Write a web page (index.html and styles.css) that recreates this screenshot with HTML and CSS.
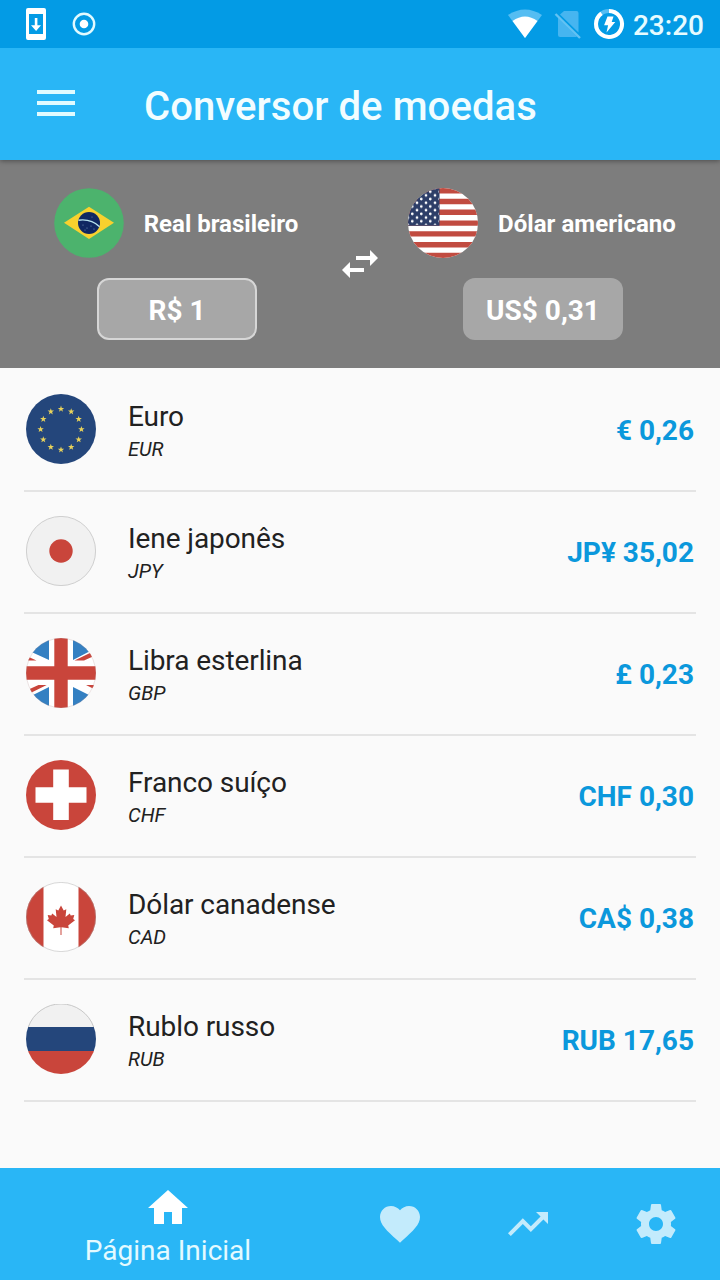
FILE: index.html
```html
<!DOCTYPE html>
<html lang="pt-BR">
<head>
<meta charset="utf-8">
<title>Conversor de moedas</title>
<link rel="stylesheet" href="styles.css">
</head>
<body>
<svg class="defs" width="0" height="0">
  <defs>
    <clipPath id="disc"><circle cx="35" cy="35" r="35"/></clipPath>
    <path id="star" d="M0-3.4 .8-1.1H3.2L1.3.4 2 2.7 0 1.3-2 2.7-1.3.4-3.2-1.1H-.8z"/>
    <pattern id="stars" width="9" height="7.4" patternUnits="userSpaceOnUse">
      <circle cx="4.3" cy="3.7" r="1.35" fill="#fff"/>
      <circle cx="0" cy="0" r="1.35" fill="#fff"/><circle cx="9" cy="0" r="1.35" fill="#fff"/>
      <circle cx="0" cy="7.4" r="1.35" fill="#fff"/><circle cx="9" cy="7.4" r="1.35" fill="#fff"/>
    </pattern>
  </defs>
</svg>
<div class="app">
  <header class="status">
    <svg width="20" height="32" viewBox="0 0 20 32"><path fill="#fff" fill-rule="evenodd" d="M2 0H18a2 2 0 0 1 2 2V30a2 2 0 0 1-2 2H2a2 2 0 0 1-2-2V2A2 2 0 0 1 2 0zM3 6V26H17V6zM8.800 10h2.600v7.200H15L10.100 23 5 17.200H8.800z"/></svg>
    <svg class="status-record" width="24" height="24" viewBox="0 0 24 24"><circle cx="12" cy="12" r="10.200" fill="none" stroke="#e1faff" stroke-width="2.400"/><circle cx="12" cy="12" r="4.300" fill="#fff"/></svg>
    <div class="status-right">
      <svg width="36" height="30" viewBox="0 0 36 30"><path fill="#55bdf2" d="M18 29 1 6Q18-5 35 6z"/><path fill="#fff" d="M18 29 5.500 12Q18 3 30.500 12z"/></svg>
      <svg class="status-sim" width="28" height="30" viewBox="0 0 28 30"><path fill="#46b5f0" d="M10 2H22.500a2 2 0 0 1 2 2V23.500L6 5.500zM4 8.500 23 27.500a2 2 0 0 1-1 .5H6a2 2 0 0 1-2-2z"/><path d="M1.500 5 26 29" stroke="#62c2f3" stroke-width="2.400"/></svg>
      <svg class="status-battery" width="32" height="32" viewBox="0 0 32 32"><circle cx="16" cy="16" r="13" fill="none" stroke="#55bdf2" stroke-width="4"/><path d="M16 3A13 13 0 1 1 8.500 5.400" fill="none" stroke="#fff" stroke-width="4"/><path fill="#fff" d="M14.500 8.500h6L18.700 14h3.600L13.500 24.500l1.600-7.300h-4z"/></svg>
      <span class="clock">23:20</span>
    </div>
  </header>
  <div class="bar">
    <span class="menu"><i></i><i></i><i></i></span>
    <h1 class="bar-title">Conversor de moedas</h1>
  </div>
  <section class="converter">
    <div class="side side-from">
      <div class="side-name">
        <svg class="flag" viewBox="0 0 70 70"><circle cx="35" cy="35" r="34.800" fill="#4cb36d"/><path fill="#f8d12e" d="M10 34.800 35 18.700 60 34.800 35 51z"/><circle cx="35" cy="35" r="11" fill="#102762"/><path d="M24.500 32.200Q37 30.500 45.600 38.700" fill="none" stroke="#b9e3ef" stroke-width="1.400"/><g fill="#7896ba"><circle cx="29" cy="37" r=".6"/><circle cx="33" cy="40" r=".6"/><circle cx="37" cy="38" r=".6"/><circle cx="31" cy="42" r=".5"/><circle cx="40" cy="41" r=".6"/><circle cx="38" cy="29" r=".5"/></g></svg>
        <span>Real brasileiro</span>
      </div>
      <div class="amount amount-active">R$ 1</div>
    </div>
    <svg class="icon" viewBox="0 0 24 24"><path d="M6.990 11 3 15l3.990 4v-3H14v-2H6.990zM21 9l-3.990-4v3H10v2h7.010v3z"/></svg>
    <div class="side side-to">
      <div class="side-name">
        <svg class="flag" viewBox="0 0 70 70"><g clip-path="url(#disc)"><path fill="#fff" d="M0 0H70V70H0z"/><path d="M0 2.700H70M0 13.500H70M0 24.300H70M0 35.100H70M0 45.900H70M0 56.700H70M0 67.500H70" stroke="#c14b40" stroke-width="5.400"/><path fill="#2d3e68" d="M0 0H31.500V37.800H0z"/><path fill="url(#stars)" d="M0 0H30.500V36.800H0z"/></g></svg>
        <span>Dólar americano</span>
      </div>
      <div class="amount">US$ 0,31</div>
    </div>
  </section>
  <main class="list">
    <div class="row">
      <svg class="flag" viewBox="0 0 70 70"><circle cx="35" cy="35" r="35" fill="#24467b"/><g fill="#e8d25b"><use href="#star" x="35" y="15"/><use href="#star" x="45.200" y="17.700"/><use href="#star" x="52.700" y="25.200"/><use href="#star" x="55.400" y="35.400"/><use href="#star" x="52.700" y="45.600"/><use href="#star" x="45.200" y="53.100"/><use href="#star" x="35" y="55.800"/><use href="#star" x="24.800" y="53.100"/><use href="#star" x="17.300" y="45.600"/><use href="#star" x="14.600" y="35.400"/><use href="#star" x="17.300" y="25.200"/><use href="#star" x="24.800" y="17.700"/></g></svg>
      <div class="names"><span class="name">Euro</span><span class="code">EUR</span></div>
      <span class="value">€ 0,26</span>
    </div>
    <div class="row">
      <svg class="flag" viewBox="0 0 70 70"><circle cx="35" cy="35" r="34.600" fill="#f1f1f1" stroke="#c4c4c4" stroke-width=".8"/><circle cx="35" cy="35" r="11.700" fill="#c9453b"/></svg>
      <div class="names"><span class="name">Iene japonês</span><span class="code">JPY</span></div>
      <span class="value">JP¥ 35,02</span>
    </div>
    <div class="row">
      <svg class="flag" viewBox="0 0 70 70"><g clip-path="url(#disc)"><path fill="#fff" d="M0 0H70V70H0z"/><path fill="#3480c2" d="M0 11.500V0H23V22zM47 0H70V10L47 22zM0 60.500 23 49V70H0zM47 49 70 60.500V70H47z"/><path fill="#c9453b" d="M0 17.800 10.500 22.600H0zM48.500 22.600 65 14.500 67.500 18.200 58 22.600zM20.700 47 4.500 55 2.500 51.500 12.500 47zM60 47H70V52z"/><path fill="#c9453b" d="M28.300 0H41.700V28.300H70V41.700H41.700V70H28.300V41.700H0V28.300H28.300z"/></g><circle cx="35" cy="35" r="34.700" fill="none" stroke="#ad8888" stroke-opacity=".4" stroke-width=".6"/></svg>
      <div class="names"><span class="name">Libra esterlina</span><span class="code">GBP</span></div>
      <span class="value">£ 0,23</span>
    </div>
    <div class="row">
      <svg class="flag" viewBox="0 0 70 70"><circle cx="35" cy="35" r="35" fill="#c9453b"/><path fill="#fff" d="M27.200 9.500H42.800V27.200H60.500V42.800H42.800V60H27.200V42.800H9.500V27.200H27.200z"/></svg>
      <div class="names"><span class="name">Franco suíço</span><span class="code">CHF</span></div>
      <span class="value">CHF 0,30</span>
    </div>
    <div class="row">
      <svg class="flag" viewBox="0 0 70 70"><g clip-path="url(#disc)"><path fill="#fff" d="M0 0H70V70H0z"/><path fill="#c9453b" d="M0 0H17.500V70H0zM52.500 0H70V70H52.500z"/><path fill="#c9453b" d="M35 23.500 37.700 28.500 40.300 27.200 39.500 35 43.800 31.500 44.700 33.600 48.300 33 47.200 37 49 38.200 42.200 43.600 42.800 46.300 35.500 45.200V53H34.500V45.200L27.200 46.300 27.800 43.600 21 38.200 22.800 37 21.700 33 25.300 33.600 26.200 31.500 30.500 35 29.700 27.200 32.300 28.500z"/></g><circle cx="35" cy="35" r="34.600" fill="none" stroke="#a0a0a0" stroke-opacity=".6" stroke-width=".7"/></svg>
      <div class="names"><span class="name">Dólar canadense</span><span class="code">CAD</span></div>
      <span class="value">CA$ 0,38</span>
    </div>
    <div class="row">
      <svg class="flag" viewBox="0 0 70 70"><g clip-path="url(#disc)"><path fill="#f1f1f1" d="M0 0H70V24H0z"/><path fill="#24467b" d="M0 23H70V47H0z"/><path fill="#c9453b" d="M0 47H70V70H0z"/></g><path d="M2.300 23A34.700 34.700 0 0 1 67.700 23" fill="none" stroke="#bbb" stroke-width=".8"/></svg>
      <div class="names"><span class="name">Rublo russo</span><span class="code">RUB</span></div>
      <span class="value">RUB 17,65</span>
    </div>
  </main>
  <nav class="tabs">
    <div class="tab tab-active">
      <svg class="icon" viewBox="0 0 24 24"><path d="M10 20v-6h4v6h5v-8h3L12 3 2 12h3v8z"/></svg>
      <span class="tab-label">Página Inicial</span>
    </div>
    <div class="tab"><svg class="icon" viewBox="0 0 24 24"><path d="M12 21.350l-1.450-1.320C5.400 15.360 2 12.280 2 8.500 2 5.420 4.420 3 7.500 3c1.740 0 3.410.81 4.500 2.090C13.090 3.810 14.760 3 16.500 3 19.580 3 22 5.420 22 8.500c0 3.780-3.400 6.860-8.550 11.540z"/></svg></div>
    <div class="tab"><svg class="icon" viewBox="0 0 24 24"><path d="M16 6l2.290 2.290-4.880 4.880-4-4L2 16.590 3.410 18l6-6 4 4 6.300-6.290L22 12V6z"/></svg></div>
    <div class="tab"><svg class="icon" viewBox="0 0 24 24"><path d="M19.430 12.980c.04-.32.07-.64.07-.98s-.03-.66-.07-.98l2.110-1.650c.19-.15.24-.42.12-.64l-2-3.460c-.12-.22-.39-.3-.61-.22l-2.490 1c-.52-.4-1.080-.73-1.690-.98l-.38-2.650C14.460 2.180 14.250 2 14 2h-4c-.25 0-.46.18-.49.42l-.38 2.650c-.61.25-1.170.59-1.690.98l-2.490-1c-.23-.09-.49 0-.61.22l-2 3.460c-.13.22-.07.49.12.64l2.110 1.650c-.04.32-.07.65-.07.98s.03.66.07.98l-2.110 1.650c-.19.15-.24.42-.12.64l2 3.460c.12.22.39.3.61.22l2.490-1c.52.4 1.080.73 1.690.98l.38 2.650c.03.24.24.42.49.42h4c.25 0 .46-.18.49-.42l.38-2.650c.61-.25 1.170-.59 1.690-.98l2.490 1c.23.09.49 0 .61-.22l2-3.460c.12-.22.07-.49-.12-.64zM12 15.500c-1.930 0-3.500-1.570-3.500-3.500s1.570-3.500 3.500-3.500 3.500 1.570 3.500 3.500-1.570 3.500-3.500 3.500z"/></svg></div>
  </nav>
</div>
</body>
</html>
```
FILE: styles.css
```css
* { box-sizing: border-box; }
body {
  margin: 0;
  font-family: Roboto, "Noto Sans", sans-serif;
  color: #212121;
}
svg { display: block; flex: none; }
.defs { position: absolute; }
.app {
  display: flex;
  flex-direction: column;
  width: 720px;
  height: 1280px;
  overflow: hidden;
  background: #fafafa;
}
.status {
  display: flex;
  align-items: center;
  height: 48px;
  padding: 0 16px 0 26px;
  background: #039be5;
  z-index: 2;
}
.status-record { margin-left: 26px; }
.status-right { display: flex; align-items: center; margin-left: auto; }
.status-sim { margin-left: 11px; }
.status-battery { margin-left: 11px; }
.clock {
  margin-left: 8px;
  padding-top: 3px;
  font-size: 28px;
  font-weight: 500;
  line-height: 32px;
  color: #e6fbff;
}
.bar {
  display: flex;
  align-items: center;
  gap: 69px;
  height: 112px;
  padding: 0 37px;
  background: #29b6f6;
  box-shadow: 0 1px 5px rgba(0, 0, 0, .4);
  z-index: 1;
}
.menu { display: grid; gap: 7px; width: 38px; margin-top: -2px; }
.menu i { height: 4px; background: #e1fbff; }
.bar-title {
  margin: 5px 0 0;
  font-size: 40px;
  font-weight: 500;
  letter-spacing: .09px;
  line-height: 48px;
  color: #f2fdff;
}
.converter {
  display: grid;
  grid-template-columns: 1fr 48px 1fr;
  align-items: center;
  height: 208px;
  padding: 0 18px;
  background: #7d7d7d;
  color: #fff;
}
.side { display: flex; flex-direction: column; align-items: center; gap: 20px; }
.side-name {
  display: flex;
  align-items: center;
  gap: 20px;
  padding-right: 2px;
  font-size: 24px;
  font-weight: 700;
  white-space: nowrap;
}
.side-name span { padding-top: 2px; }
.side-to .side-name { letter-spacing: .05px; }
.flag { width: 70px; height: 70px; }
.amount {
  width: 160px;
  height: 62px;
  padding-top: 1px;
  border: 2px solid transparent;
  border-radius: 12px;
  background: #a7a7a7;
  font-size: 28px;
  font-weight: 700;
  line-height: 60px;
  text-align: center;
}
.amount-active { border-color: #d6d6d6; }
.icon { width: 48px; height: 48px; fill: currentColor; }
.list { flex: 1; padding: 2px 24px 0; }
.row {
  display: flex;
  align-items: center;
  height: 122px;
  padding: 0 2px;
  border-bottom: 2px solid #e4e4e4;
}
.row .flag { margin-top: -2px; }
.names { display: flex; flex-direction: column; margin-left: 32px; padding-top: 4px; }
.name { font-size: 28px; line-height: 34px; letter-spacing: -.08px; }
.code { font-size: 20px; line-height: 30px; font-style: italic; }
.value {
  margin-left: auto;
  font-size: 28px;
  font-weight: 700;
  color: #0b98dc;
}
.tabs {
  display: grid;
  grid-template-columns: 336px repeat(3, 128px);
  height: 112px;
  background: #29b6f6;
  color: #c3ebfc;
}
.tab { display: flex; flex-direction: column; align-items: center; justify-content: center; }
.tab-active { color: #fff; justify-content: flex-start; padding-top: 16px; }
.tab-label { padding-top: 1px; font-size: 28px; line-height: 36px; color: #e4faff; }
```
